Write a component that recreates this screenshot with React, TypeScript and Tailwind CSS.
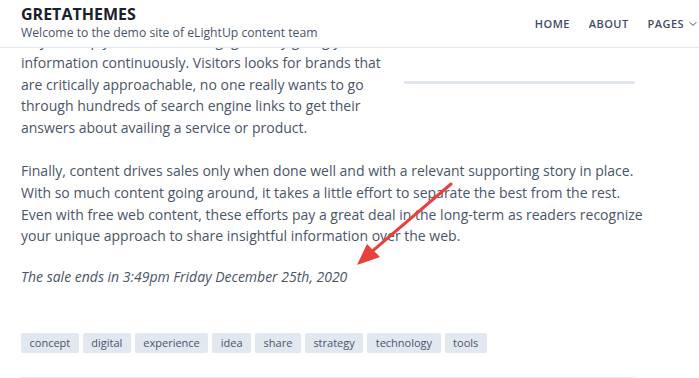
import { ChevronDown } from 'lucide-react';

const tags = ['concept', 'digital', 'experience', 'idea', 'share', 'strategy', 'technology', 'tools'];

const finalLines = [
  'Finally, content drives sales only when done well and with a relevant supporting story in place.',
  'With so much content going around, it takes a little effort to separate the best from the rest.',
  'Even with free web content, these efforts pay a great deal in the long-term as readers recognize',
  'your unique approach to share insightful information over the web.',
];

export default function App() {
  return (
    <div
      className="relative w-[699px] h-[378px] overflow-hidden bg-white text-[#4a5568]"
      style={{ fontFamily: '"Open Sans", sans-serif' }}
    >
      {/* Header */}
      <header className="flex h-[48px] items-start justify-between border-b border-[#e2e6ee] bg-white pl-[21px]">
        <div className="pt-[4px]">
          <div className="text-[16px] font-bold leading-[20px] text-[#1a202c]">GRETATHEMES</div>
          <div className="text-[12.2px] leading-[17px] text-[#4a5568]">Welcome to the demo site of eLightUp content team</div>
        </div>
        <nav className="flex items-center gap-[19px] pl-[2px] pt-[16px] text-[11px] font-semibold uppercase tracking-[0.04em] text-[#3f4d63]">
          <span>Home</span>
          <span>About</span>
          <span className="flex items-center gap-[3px]">
            Pages
            <ChevronDown className="h-[12px] w-[12px]" strokeWidth={2} />
          </span>
        </nav>
      </header>

      {/* Content */}
      <main className="px-[21px] text-[14px] leading-[21.6px]">
        {/* previous line, scrolled mostly under the header */}
        <div className="h-[4px] overflow-hidden">
          <p className="-mt-[17.6px] w-[360px] whitespace-nowrap">way to keep your audience engaged is by giving you</p>
        </div>
        <div className="flex justify-between">
          <p className="w-[360px]">
            information continuously. Visitors looks for brands that are critically approachable, no one really wants to go
            through hundreds of search engine links to get their answers about availing a service or product.
          </p>
          <div className="mr-[43px] mt-[29px] h-[3px] w-[231px] bg-[#e2e6ee]" />
        </div>
        <p className="mt-[22px] whitespace-nowrap">
          {finalLines.map((l, i) => (
            <span key={i} className="block">
              {l}
            </span>
          ))}
        </p>
        <p className="mt-[19px] italic">The sale ends in 3:49pm Friday December 25th, 2020</p>
        <div className="mt-[46px] flex gap-[4px]">
          {tags.map((t) => (
            <span key={t} className="rounded-[2px] bg-[#e2e8f0] px-[8.5px] text-[11px] leading-[20px] text-[#4a5568]">
              {t}
            </span>
          ))}
        </div>
        <div className="mt-[24px] w-[613px] border-t border-[#e2e6ee]" />
      </main>

      {/* Annotation arrow */}
      <svg className="pointer-events-none absolute left-0 top-0" width="699" height="378">
        <line x1="451" y1="184" x2="362" y2="260" stroke="#e8413c" strokeWidth="3" strokeLinecap="round" />
        <polygon points="357,265 367,244 380,257" fill="#e8413c" />
      </svg>
    </div>
  );
}
